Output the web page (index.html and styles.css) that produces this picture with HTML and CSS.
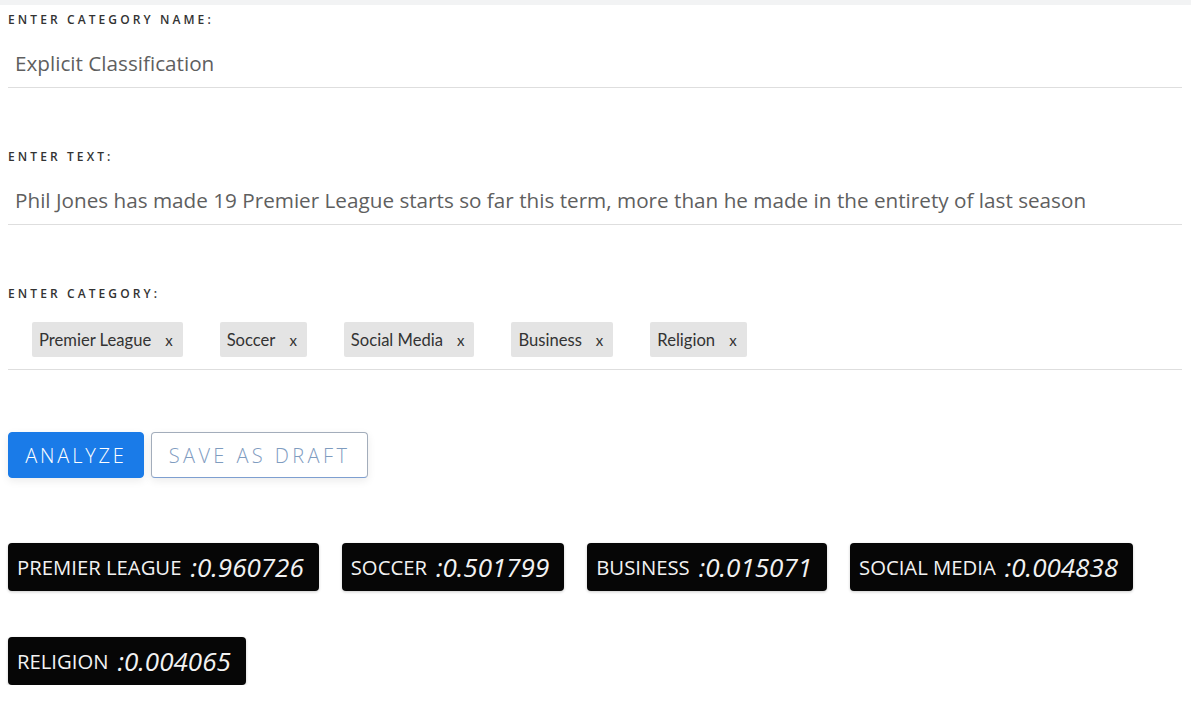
FILE: index.html
```html
<!DOCTYPE html>
<html>
<head>
<meta charset="utf-8">
<link rel="stylesheet" href="styles.css">
</head>
<body>
<div class="topband"></div>
<main class="page">
  <section class="field first">
    <div class="label">ENTER CATEGORY NAME:</div>
    <div class="value">Explicit Classification</div>
  </section>
  <section class="field">
    <div class="label">ENTER TEXT:</div>
    <div class="value">Phil Jones has made 19 Premier League starts so far this term, more than he made in the entirety of last season</div>
  </section>
  <section class="field">
    <div class="label">ENTER CATEGORY:</div>
    <div class="chips">
      <span class="chip">Premier League <span class="x">x</span></span>
      <span class="chip">Soccer <span class="x">x</span></span>
      <span class="chip">Social Media <span class="x">x</span></span>
      <span class="chip">Business <span class="x">x</span></span>
      <span class="chip">Religion <span class="x">x</span></span>
    </div>
  </section>
  <div class="actions">
    <button class="btn primary">ANALYZE</button>
    <button class="btn outline">SAVE AS DRAFT</button>
  </div>
  <div class="results">
    <div class="result"><span class="rlabel">PREMIER LEAGUE</span><span class="rval">:0.960726</span></div>
    <div class="result"><span class="rlabel">SOCCER</span><span class="rval">:0.501799</span></div>
    <div class="result"><span class="rlabel">BUSINESS</span><span class="rval">:0.015071</span></div>
    <div class="result"><span class="rlabel">SOCIAL MEDIA</span><span class="rval">:0.004838</span></div>
    <div class="result"><span class="rlabel">RELIGION</span><span class="rval">:0.004065</span></div>
  </div>
</main>
</body>
</html>
```

FILE: styles.css
```css
html, body {
  margin: 0;
  padding: 0;
  background: #ffffff;
  font-family: "Open Sans", "Noto Sans", sans-serif;
}

.topband {
  height: 5px;
  background: #f2f3f4;
}

.page {
  padding: 0 9px 0 8px;
}

.field {
  border-bottom: 1px solid #dedede;
  margin-top: 62px;
}

.field.first {
  margin-top: 8px;
}

.label {
  font-size: 12px;
  line-height: 14px;
  font-weight: 600;
  letter-spacing: 3.1px;
  color: #333333;
}

.value {
  font-size: 20.7px;
  line-height: 26px;
  color: #5f5f5f;
  padding: 23px 0 11px 7px;
  white-space: nowrap;
}

.chips {
  display: flex;
  gap: 37px;
  padding: 21px 0 12px 24px;
}

.chip {
  display: inline-flex;
  align-items: center;
  height: 35px;
  padding: 0 10px 0 7px;
  background: #e4e4e4;
  border-radius: 2px;
  font-family: "Lato", "Open Sans", sans-serif;
  font-size: 16.6px;
  color: #333;
}

.chip .x {
  margin-left: 14px;
  font-size: 15px;
}

.actions {
  display: flex;
  gap: 7px;
  margin-top: 62px;
}

.btn {
  height: 46px;
  border-radius: 4px;
  font-family: "Open Sans", sans-serif;
  font-size: 20px;
  font-weight: 300;
  cursor: pointer;
  box-shadow: 0 3px 8px rgba(0, 0, 0, 0.08);
}

.btn.primary {
  width: 136px;
  background: #1a7be8;
  color: #ffffff;
  border: 1px solid #1a7be8;
  letter-spacing: 2.8px;
}

.btn.outline {
  width: 217px;
  background: #ffffff;
  color: #7f9cbf;
  border: 1px solid #a3adbb;
  border-bottom-color: #7e9fd0;
  letter-spacing: 3.4px;
}

.results {
  display: flex;
  flex-wrap: wrap;
  column-gap: 23px;
  row-gap: 46px;
  margin-top: 65px;
  width: 1140px;
}

.result {
  display: inline-flex;
  align-items: center;
  height: 48px;
  padding: 0 15px 0 9px;
  background: #060606;
  border-radius: 4px;
  color: #f2f2f2;
  box-shadow: 0 1px 3px rgba(0, 0, 0, 0.2);
}

.rlabel {
  font-size: 20.3px;
}

.rval {
  font-size: 26px;
  font-style: italic;
  margin-left: 9px;
}
```
